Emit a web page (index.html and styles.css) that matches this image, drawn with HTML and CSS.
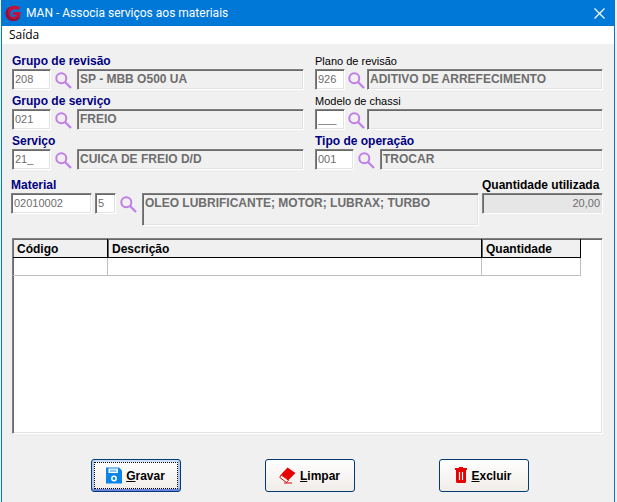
FILE: index.html
```html
<!DOCTYPE html>
<html lang="pt-BR">
<head>
    <meta charset="UTF-8">
    <meta name="viewport" content="width=device-width, initial-scale=1.0">
    <title>MAN - Associa serviços aos materiais</title>
    <link rel="stylesheet" href="styles.css">
</head>
<body>
    <!-- Lupa usada em todos os botões de pesquisa -->
    <svg class="sprite" width="0" height="0" aria-hidden="true">
        <symbol id="lupa" viewBox="0 0 17 17">
            <circle cx="6.3" cy="6.3" r="5" fill="none" stroke="#c07ee8" stroke-width="2"/>
            <path d="M10 10 L16 16" stroke="#c07ee8" stroke-width="2.2"/>
        </symbol>
    </svg>

    <div class="window">
        <header class="titlebar">
            <svg class="logo" width="17" height="17" viewBox="0 0 17 17" aria-hidden="true">
                <path d="M15.5 2.5 C12 0 6 0 3 3 C-0.5 6.500 0 12 3.500 14.500 C7 17 12.500 16.500 14.500 13 L16 7 H8.500 L7.500 10 H11.500 C10 12.500 6.500 12.500 5.500 10 C4.500 7 6.500 4.500 9.500 4.500 H14 Z" fill="#c0143c"/>
                <path d="M3 3 C-0.5 6.500 0 12 3.500 14.500 C7 17 12.500 16.500 14.500 13 L15 11 C12 15 6 15 4 11 C2.500 8 2.500 5 5 2 Z" fill="#8c1040"/>
            </svg>
            <h1>MAN - Associa serviços aos materiais</h1>
            <button type="button" class="close" aria-label="Fechar">
                <svg width="11" height="11" viewBox="0 0 11 11"><path d="M0.5 0.5 L10.500 10.500 M10.500 0.5 L0.5 10.500" stroke="#fff" stroke-width="1.200"/></svg>
            </button>
        </header>

        <nav class="menu"><a href="#">Saída</a></nav>

        <form class="content">
            <div class="fields">
                <div class="field">
                    <label class="required" for="grupoRevisao">Grupo de revisão</label>
                    <div class="line">
                        <input type="text" id="grupoRevisao" class="code" value="208">
                        <button type="button" class="search" aria-label="Pesquisar grupo de revisão"><svg width="17" height="17"><use href="#lupa"/></svg></button>
                        <input type="text" class="desc" value="SP - MBB O500 UA" aria-label="Descrição do grupo de revisão" readonly>
                    </div>
                </div>
                <div class="field">
                    <label for="plano">Plano de revisão</label>
                    <div class="line">
                        <input type="text" id="plano" class="code short" value="926">
                        <button type="button" class="search tight" aria-label="Pesquisar plano"><svg width="17" height="17"><use href="#lupa"/></svg></button>
                        <input type="text" class="desc" value="ADITIVO DE ARREFECIMENTO" aria-label="Descrição do plano" readonly>
                    </div>
                </div>
                <div class="field">
                    <label class="required" for="grupoServico">Grupo de serviço</label>
                    <div class="line">
                        <input type="text" id="grupoServico" class="code" value="021">
                        <button type="button" class="search" aria-label="Pesquisar grupo de serviço"><svg width="17" height="17"><use href="#lupa"/></svg></button>
                        <input type="text" class="desc" value="FREIO" aria-label="Descrição do grupo de serviço" readonly>
                    </div>
                </div>
                <div class="field">
                    <label for="chassi">Modelo de chassi</label>
                    <div class="line">
                        <input type="text" id="chassi" class="code short" value="___">
                        <button type="button" class="search tight" aria-label="Pesquisar chassi"><svg width="17" height="17"><use href="#lupa"/></svg></button>
                        <input type="text" class="desc" value="" aria-label="Descrição do chassi" readonly>
                    </div>
                </div>
                <div class="field">
                    <label class="required" for="servico">Serviço</label>
                    <div class="line">
                        <input type="text" id="servico" class="code" value="21_">
                        <button type="button" class="search" aria-label="Pesquisar serviço"><svg width="17" height="17"><use href="#lupa"/></svg></button>
                        <input type="text" class="desc" value="CUICA DE FREIO D/D" aria-label="Descrição do serviço" readonly>
                    </div>
                </div>
                <div class="field">
                    <label class="required" for="operacao">Tipo de operação</label>
                    <div class="line">
                        <input type="text" id="operacao" class="code" value="001">
                        <button type="button" class="search" aria-label="Pesquisar operação"><svg width="17" height="17"><use href="#lupa"/></svg></button>
                        <input type="text" class="desc" value="TROCAR" aria-label="Descrição da operação" readonly>
                    </div>
                </div>
            </div>

            <div class="material">
                <div class="field grow">
                    <label class="required" for="material">Material</label>
                    <div class="line">
                        <input type="text" id="material" class="code long" value="02010002">
                        <input type="text" class="code digit" value="5" aria-label="Dígito">
                        <button type="button" class="search" aria-label="Pesquisar material"><svg width="17" height="17"><use href="#lupa"/></svg></button>
                        <textarea class="desc tall" aria-label="Descrição do material" readonly>OLEO LUBRIFICANTE; MOTOR; LUBRAX; TURBO</textarea>
                    </div>
                </div>
                <div class="field">
                    <label class="strong" for="quantidade">Quantidade utilizada</label>
                    <div class="line">
                        <input type="text" id="quantidade" class="amount" value="20,00" readonly>
                    </div>
                </div>
            </div>

            <div class="grid">
                <table>
                    <colgroup>
                        <col class="col-codigo">
                        <col>
                        <col class="col-quantidade">
                    </colgroup>
                    <thead>
                        <tr><th>Código</th><th>Descrição</th><th>Quantidade</th></tr>
                    </thead>
                    <tbody>
                        <tr><td></td><td></td><td></td></tr>
                    </tbody>
                </table>
            </div>

            <div class="actions">
                <button type="button" class="action focused">
                    <svg width="16" height="17" viewBox="0 0 16 17" aria-hidden="true">
                        <path d="M0 0.5 H13 L16 3.500 V16.500 H0 Z" fill="#0a84e8"/>
                        <path d="M2.500 1.500 H12 V6 H2.500 Z" fill="#fff"/>
                        <path d="M4 2.500 H10.500 V5 H4 Z" fill="#8cc8f4"/>
                        <circle cx="8" cy="11.500" r="2.200" fill="#0a84e8" stroke="#fff" stroke-width="1.500"/>
                    </svg>
                    <span><u>G</u>ravar</span>
                </button>
                <button type="button" class="action">
                    <svg width="17" height="17" viewBox="0 0 17 17" aria-hidden="true">
                        <path d="M8.500 0.5 L16.500 6 L9.500 13 L2 7.500 Z" fill="#e60000"/>
                        <path d="M2 8 L0.800 10.500 L7.500 15.500 L9.500 13.200 Z" fill="#fff" stroke="#e60000" stroke-width="1"/>
                        <path d="M5 16 H13" stroke="#e60000" stroke-width="1"/>
                    </svg>
                    <span><u>L</u>impar</span>
                </button>
                <button type="button" class="action">
                    <svg width="12" height="17" viewBox="0 0 12 17" aria-hidden="true">
                        <path d="M0 1 H4 V0 H8 V1 H12 V3 H0 Z M1 3 H11 V14.500 Q11 16 9.500 16 H2.500 Q1 16 1 14.500 Z" fill="#e60000"/>
                        <path d="M4.500 5 V13 M7.500 5 V13" stroke="#fff" stroke-width="1.200"/>
                    </svg>
                    <span><u>E</u>xcluir</span>
                </button>
            </div>
        </form>
    </div>
</body>
</html>
```
FILE: styles.css
```css
* {
    box-sizing: border-box;
}
body {
    margin: 0;
    background: #f0f0f0;
    font-family: "Liberation Sans", Arial, sans-serif;
    font-size: 12px;
    color: #000;
}
.sprite {
    position: absolute;
}
.window {
    min-height: 100vh;
    margin: 0 2px 0 1px;
    border-left: 1px solid #0078d7;
    border-right: 1px solid #0078d7;
    background: #f0f0f0;
}
.titlebar {
    display: flex;
    align-items: center;
    height: 26px;
    padding: 0 9px 0 3px;
    background: #0078d7;
    color: #fff;
}
.titlebar h1 {
    flex: 1;
    margin: 0 0 0 4px;
    font-family: Roboto, "Noto Sans", sans-serif;
    font-size: 12px;
    font-weight: normal;
}
.close {
    display: flex;
    padding: 0;
    border: none;
    background: none;
}
.menu {
    height: 18px;
    padding-left: 7px;
    background: #fff;
    font-family: "Open Sans", "Noto Sans", sans-serif;
    line-height: 18px;
}
.menu a {
    color: #000;
    text-decoration: none;
}
.content {
    padding: 9px 11px 9px 10px;
}
.fields {
    display: grid;
    grid-template-columns: 292fr 288fr;
    column-gap: 11px;
    row-gap: 3px;
}
.field label {
    display: block;
    font-size: 11px;
    line-height: 16px;
    white-space: nowrap;
}
.field .required {
    color: #000080;
    font-size: 12px;
    font-weight: bold;
}
.field .strong {
    font-size: 12px;
    font-weight: bold;
}
.line {
    display: flex;
    align-items: flex-start;
}
input,
textarea {
    display: block;
    height: 21px;
    margin: 0;
    padding: 0 2px 1px;
    border: 1px solid;
    border-color: #808080 #fff #fff #808080;
    border-radius: 0;
    outline: none;
    box-shadow: inset 1px 1px #696969, inset -1px -1px #e3e3e3;
    background: #fff;
    color: #6d6d6d;
    font-family: inherit;
    font-size: 11px;
}
.code {
    width: 39px;
}
.short {
    width: 30px;
}
.long {
    width: 81px;
}
.digit {
    width: 21px;
    margin-left: 3px;
}
.desc {
    flex: 1;
    min-width: 0;
    background: #f0f0f0;
    font-size: 12px;
    font-weight: bold;
}
.tall {
    height: 33px;
    padding: 2px;
    line-height: 15px;
    resize: none;
    overflow: hidden;
}
.amount {
    width: 121px;
    background: #e6e6e6;
    text-align: right;
}
.search {
    display: flex;
    margin: 3px 5px 0 4px;
    padding: 0;
    border: none;
    background: none;
}
.tight {
    margin: 3px 2px 0 3px;
}
.material {
    display: flex;
    gap: 3px;
    margin: 7px 0 0 -1px;
}
.grow {
    flex: 1;
}
.grid {
    height: 196px;
    margin-top: 12px;
    padding-right: 21px;
    border: 1px solid;
    border-color: #808080 #fff #fff #808080;
    box-shadow: inset 1px 1px #696969, inset -1px -1px #e3e3e3;
    background: #fff;
}
table {
    width: 100%;
    table-layout: fixed;
    border-collapse: separate;
    border-spacing: 0;
}
.col-codigo {
    width: 95px;
}
.col-quantidade {
    width: 99px;
}
th {
    height: 19px;
    padding: 2px 4px 0;
    border-right: 1px solid #000;
    border-bottom: 1px solid #000;
    background: #f0f0f0;
    box-shadow: inset 1px 1px #696969;
    text-align: left;
    line-height: 16px;
}
td {
    height: 18px;
    padding: 0;
    border-right: 1px solid #c0c0c0;
    border-bottom: 1px solid #c0c0c0;
}
.actions {
    display: flex;
    justify-content: center;
    gap: 84px;
    margin-top: 25px;
    padding-left: 4px;
}
.action {
    display: flex;
    align-items: center;
    justify-content: center;
    gap: 4px;
    width: 90px;
    height: 33px;
    padding: 0;
    border: 1px solid #003c74;
    border-radius: 3px;
    background: linear-gradient(#fff, #f0ece8);
    color: #000;
    font-family: inherit;
    font-size: 12px;
    font-weight: bold;
}
.focused {
    box-shadow: inset 0 -2px #6d83e0, inset 2px 0 #b4c8f4, inset -2px 0 #b4c8f4, inset 0 2px #cfe0fc;
    outline: 1px dotted #000;
    outline-offset: -4px;
}
```
